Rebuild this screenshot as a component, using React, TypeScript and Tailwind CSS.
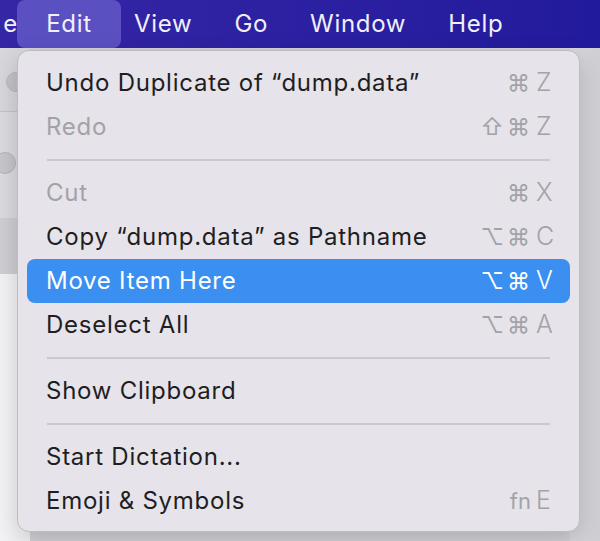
import React from "react";

type Item =
  | { sep: true }
  | { label: string; mods?: string; key?: string; disabled?: boolean; active?: boolean };

const items: Item[] = [
  { label: "Undo Duplicate of “dump.data”", mods: "⌘", key: "Z" },
  { label: "Redo", mods: "⇧⌘", key: "Z", disabled: true },
  { sep: true },
  { label: "Cut", mods: "⌘", key: "X", disabled: true },
  { label: "Copy “dump.data” as Pathname", mods: "⌥⌘", key: "C" },
  { label: "Move Item Here", mods: "⌥⌘", key: "V", active: true },
  { label: "Deselect All", mods: "⌥⌘", key: "A" },
  { sep: true },
  { label: "Show Clipboard" },
  { sep: true },
  { label: "Start Dictation..." },
  { label: "Emoji & Symbols", mods: "fn", key: "E" },
];

const font = { fontFamily: 'Inter, "DejaVu Sans", sans-serif' };

export default function App() {
  return (
    <div className="relative w-[600px] h-[541px] overflow-hidden bg-[#d3d2d7]" style={font}>
      {/* menu bar */}
      <div className="relative z-10 h-[48px] flex items-center bg-gradient-to-r from-[#3526a6] to-[#221a9c] text-[24px] tracking-[0.7px] text-[#f1effa]">
        <div className="w-[17px] h-full flex items-center justify-end overflow-hidden">
          <span className="-mr-[1px]">e</span>
        </div>
        <div className="h-full w-[104px] flex items-center justify-center rounded-[8px] bg-[#5a50c2]">Edit</div>
        <span className="ml-[13px]">View</span>
        <span className="ml-[42px]">Go</span>
        <span className="ml-[42px]">Window</span>
        <span className="ml-[42px]">Help</span>
      </div>

      {/* background finder window on the left */}
      <div className="absolute left-0 top-[48px] w-[30px] h-[493px] flex flex-col">
        <div className="h-[64px] bg-[#d8d7dc] border-b border-[#c4c3c8] relative">
          <div className="absolute left-[6px] top-[24px] w-[20px] h-[20px] rounded-full bg-[#c3c2c7] border border-[#b8b7bc]" />
        </div>
        <div className="h-[106px] bg-[#dcdbe0] relative">
          <div className="absolute -left-[6px] top-[40px] w-[22px] h-[22px] rounded-full bg-[#c7c6cb] border border-[#b5b4b9]" />
        </div>
        <div className="h-[56px] bg-[#cfced3]" />
        <div className="flex-1 bg-[#f3f3f5]" />
      </div>
      <div className="absolute right-0 top-[48px] w-[30px] h-[493px] bg-gradient-to-r from-[#d9d8dd] to-[#cfced3]" />

      {/* menu */}
      <div className="absolute left-[17px] top-[50px] w-[563px] h-[482px] rounded-[12px] bg-[#e6e4ea] border border-[#bdbcc2] shadow-[0_8px_24px_rgba(0,0,0,0.18)] pt-[10px] px-[9px] z-20">
        {items.map((it, i) =>
          "sep" in it ? (
            <div key={i} className="h-[22px] flex items-center px-[20px]">
              <div className="h-[2px] w-full bg-[#cac9ce]" />
            </div>
          ) : (
            <div
              key={i}
              className={
                "h-[44px] flex items-center pl-[19px] pr-[12px] rounded-[8px] text-[24px] tracking-[0.75px] " +
                (it.active
                  ? "bg-[#3b8ff0] text-white"
                  : it.disabled
                  ? "text-[#a3a2a7]"
                  : "text-[#1f1e22]")
              }
            >
              <span className="flex-1 whitespace-nowrap">{it.label}</span>
              {it.key && (
                <span
                  className={
                    "flex items-center " + (it.active ? "text-white" : "text-[#a3a2a7]")
                  }
                >
                  {it.mods === "fn" ? (
                    <span className="text-[22px] tracking-[0px] mr-[2px]">fn</span>
                  ) : (
                    <span className="text-[23px] tracking-[3px]">{it.mods}</span>
                  )}
                  <span className="w-[22px] ml-[3px] text-left text-[25px] font-light">{it.key}</span>
                </span>
              )}
            </div>
          )
        )}
      </div>
    </div>
  );
}
